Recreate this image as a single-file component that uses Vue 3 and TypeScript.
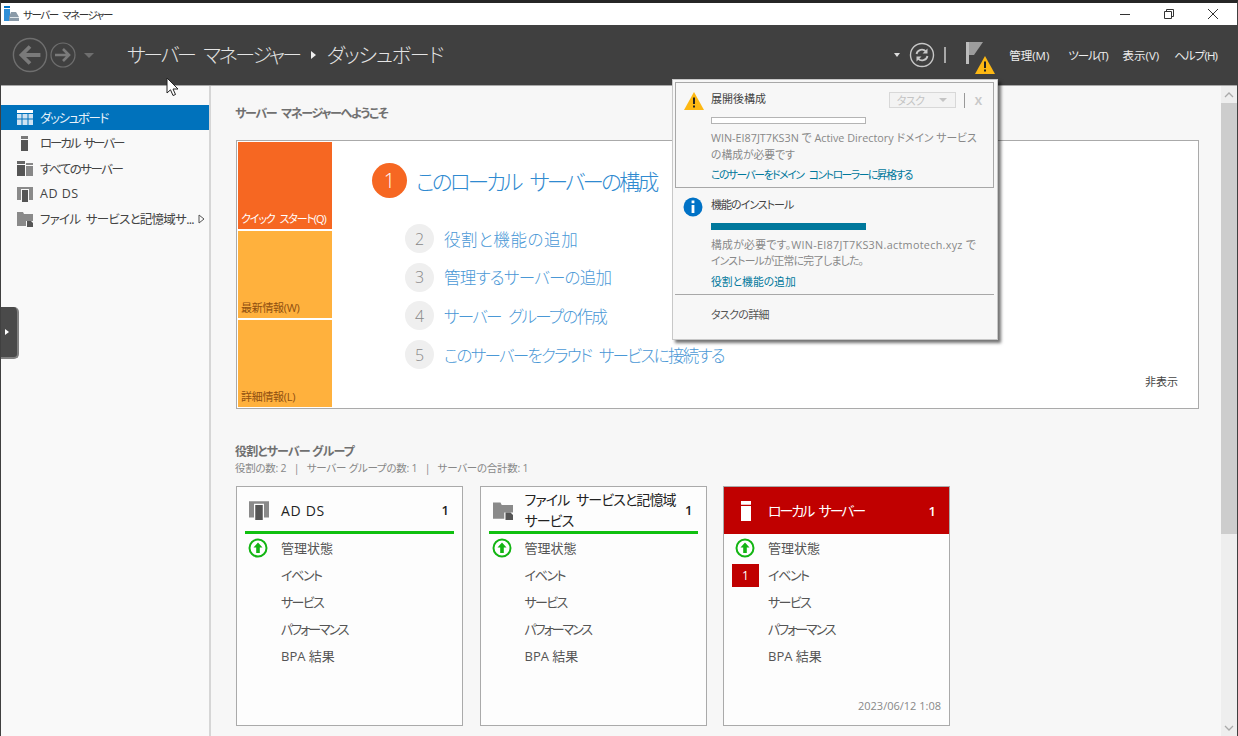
<script setup lang="ts">
interface NavItem {
  label: string
  icon: string
  ls: number
  ws?: number
  active?: boolean
  arrow?: boolean
}

interface RoleCard {
  title: string
  ls: number
  ws?: number
  count: number
  icon: string
  alert?: boolean
  time?: string
}

const navItems: NavItem[] = [
  { label: 'ダッシュボード', icon: 'dash', ls: -1.4, active: true },
  { label: 'ローカル サーバー', icon: 'local', ls: -2.1, ws: 3 },
  { label: 'すべてのサーバー', icon: 'all', ls: -1.5 },
  { label: 'AD DS', icon: 'adds', ls: 0.5 },
  { label: 'ファイル サービスと記憶域サ...', icon: 'files', ls: -0.75, ws: 3, arrow: true },
]

const steps = [
  { n: 2, label: '役割と機能の追加', ls: 0.6 },
  { n: 3, label: '管理するサーバーの追加', ls: -0.7 },
  { n: 4, label: 'サーバー グループの作成', ls: -1.7 },
  { n: 5, label: 'このサーバーをクラウド サービスに接続する', ls: -1.7 },
]

const menus = [
  { label: '管理(M)', ls: 0 },
  { label: 'ツール(T)', ls: -1.1 },
  { label: '表示(V)', ls: 0 },
  { label: 'ヘルプ(H)', ls: -0.9 },
]

const rows = [
  { label: 'イベント', ls: -1.4 },
  { label: 'サービス', ls: -1.6 },
  { label: 'パフォーマンス', ls: -2 },
  { label: 'BPA 結果', ls: 0 },
]

const cards: RoleCard[] = [
  { title: 'AD DS', ls: 0.7, count: 1, icon: 'adds' },
  { title: 'ファイル サービスと記憶域 サービス', ls: -0.9, ws: 4, count: 1, icon: 'files' },
  { title: 'ローカル サーバー', ls: -2.1, ws: 4, count: 1, icon: 'local', alert: true, time: '2023/06/12 1:08' },
]
</script>

<template>
  <div class="window">
    <div class="titlebar">
      <svg class="app-icon" width="16" height="16" viewBox="0 0 16 16">
        <rect x="0" y="0" width="6" height="2" fill="#0072c6" />
        <rect x="0" y="3" width="6" height="12" fill="#2f8fd8" />
        <path d="M5 11 L7 6 H12 L15 11 V15 H5 Z" fill="#8a9aa8" />
        <rect x="6" y="11" width="9" height="1" fill="#dfe6ea" />
      </svg>
      <span class="title-text">サーバー マネージャー</span>
      <div class="window-btns">
        <svg width="12" height="12" viewBox="0 0 12 12"><path d="M1 6.5H11" stroke="#333" fill="none" /></svg>
        <svg width="12" height="12" viewBox="0 0 12 12"><path d="M1.5 3.5H8.5V10.5H1.5Z M3.5 3.5V1.5H10.5V8.5H8.5" stroke="#333" fill="none" /></svg>
        <svg width="12" height="12" viewBox="0 0 12 12"><path d="M1 1L11 11M11 1L1 11" stroke="#333" fill="none" /></svg>
      </div>
    </div>

    <header class="header">
      <div class="nav-btns">
        <svg width="36" height="36" viewBox="0 0 38 38">
          <circle cx="19" cy="19" r="17.5" fill="none" stroke="#6e6e6e" stroke-width="1.5" />
          <path d="M30 19H11M19 10L10 19L19 28" fill="none" stroke="#7a7a7a" stroke-width="4" />
        </svg>
        <svg width="26" height="26" viewBox="0 0 26 26">
          <circle cx="13" cy="13" r="12" fill="none" stroke="#6e6e6e" stroke-width="1.2" />
          <path d="M5 13H19M13 7L19 13L13 19" fill="none" stroke="#7a7a7a" stroke-width="2.6" />
        </svg>
        <span class="nav-caret" />
      </div>
      <div class="crumb">
        <span class="crumb-root">サーバー マネージャー</span>
        <span class="crumb-arrow" />
        <span class="crumb-page">ダッシュボード</span>
      </div>
      <div class="header-right">
        <span class="small-caret" />
        <svg class="refresh" width="26" height="26" viewBox="0 0 26 26">
          <circle cx="13" cy="13" r="11.5" fill="none" stroke="#c8c8c8" stroke-width="1.4" />
          <path d="M7.5 12A5.5 5.5 0 0 1 17 9.5M18.5 14A5.5 5.5 0 0 1 9 16.5" fill="none" stroke="#c8c8c8" stroke-width="1.8" />
          <path d="M18.5 6.5V11.5H13.5Z M7.5 19.5V14.5H12.5Z" fill="#c8c8c8" />
        </svg>
        <span class="bar" />
        <div class="flag">
          <svg width="18" height="24" viewBox="0 0 18 24">
            <path d="M0 0H3V22H0Z" fill="#bdbdbd" />
            <path d="M3 0H17L8 13H3Z" fill="#9c9c9c" />
          </svg>
          <svg class="flag-warn" width="20" height="18" viewBox="0 0 20 18">
            <path d="M10 0L20 18H0Z" fill="#fdb813" />
            <path d="M9 5.5H11V12H9ZM9 13.5H11V15.5H9Z" fill="#222" />
          </svg>
        </div>
        <nav class="menus">
          <span v-for="m in menus" :key="m.label" :style="{ letterSpacing: m.ls + 'px' }">{{ m.label }}</span>
        </nav>
      </div>
    </header>

    <div class="body">
      <aside class="sidebar">
        <div
          v-for="item in navItems"
          :key="item.label"
          class="nav-item"
          :class="{ active: item.active }"
        >
          <svg class="nav-icon" width="16" height="16" viewBox="0 0 16 16">
            <template v-if="item.icon === 'dash'">
              <rect x="0" y="0" width="16" height="3" fill="#fff" />
              <path d="M0 4H4.5V8.5H0ZM5.5 4H10.5V8.5H5.5ZM11.5 4H16V8.5H11.5ZM0 9.5H4.5V15H0ZM5.5 9.5H10.5V15H5.5ZM11.5 9.5H16V15H11.5Z" fill="#cfe3f3" />
            </template>
            <template v-else-if="item.icon === 'local'">
              <rect x="4" y="1" width="7" height="3" fill="#7a7a7a" />
              <rect x="4" y="5" width="7" height="11" fill="#555" />
            </template>
            <template v-else-if="item.icon === 'all'">
              <rect x="0" y="1" width="8" height="3" fill="#666" />
              <rect x="0" y="5" width="8" height="11" fill="#555" />
              <rect x="9" y="3" width="7" height="2" fill="#888" />
              <rect x="9" y="6" width="7" height="10" fill="#888" />
            </template>
            <template v-else-if="item.icon === 'adds'">
              <path d="M0 1H4V14H0ZM12 1H16V14H12ZM4 1H12V3H4Z" fill="#8a8a8a" />
              <rect x="5" y="4" width="6" height="12" fill="#555" />
            </template>
            <template v-else>
              <path d="M0 1H6L7 3H16V10H9V15H0Z" fill="#8a8a8a" />
              <path d="M10 10H14L16 12V16H10Z" fill="#555" />
            </template>
          </svg>
          <span class="nav-label" :style="{ letterSpacing: item.ls + 'px', wordSpacing: (item.ws ?? 0) + 'px' }">{{ item.label }}</span>
          <svg v-if="item.arrow" class="nav-arrow" width="7" height="10" viewBox="0 0 7 10">
            <path d="M1 1L6 5L1 9Z" fill="none" stroke="#555" />
          </svg>
        </div>
        <div class="drawer"><span /></div>
      </aside>

      <main class="main">
        <div class="content">
          <h2 class="welcome">サーバー マネージャーへようこそ</h2>
          <section class="quick">
            <div class="tiles">
              <div class="tile primary">クイック スタート(Q)</div>
              <div class="tile">最新情報(W)</div>
              <div class="tile">詳細情報(L)</div>
            </div>
            <div class="quick-body">
              <div class="step-main">
                <span class="step-main-n">1</span>
                <span class="step-main-label">このローカル サーバーの構成</span>
              </div>
              <div class="step-list">
                <div v-for="s in steps" :key="s.n" class="step">
                  <span class="step-n">{{ s.n }}</span>
                  <span :style="{ letterSpacing: s.ls + 'px' }">{{ s.label }}</span>
                </div>
              </div>
            </div>
            <span class="hide-link">非表示</span>
          </section>

          <h3 class="roles-title">役割とサーバー グループ</h3>
          <p class="roles-sub">役割の数: 2 &nbsp; | &nbsp; サーバー グループの数: 1 &nbsp; | &nbsp; サーバーの合計数: 1</p>

          <div class="cards">
            <article v-for="c in cards" :key="c.title" class="card">
              <div class="card-head" :class="{ alert: c.alert }">
                <svg class="card-icon" width="20" height="20" viewBox="0 0 16 16">
                  <template v-if="c.icon === 'adds'">
                    <path d="M0 1H4V14H0ZM12 1H16V14H12ZM4 1H12V3H4Z" fill="#8a8a8a" />
                    <rect x="5" y="4" width="6" height="12" fill="#555" />
                  </template>
                  <template v-else-if="c.icon === 'files'">
                    <path d="M0 2H6L7 4H16V10H9V15H0Z" fill="#8a8a8a" />
                    <path d="M10 10H14L16 12V16H10Z" fill="#555" />
                  </template>
                  <template v-else>
                    <rect x="4" y="0" width="8" height="3" fill="#fff" />
                    <rect x="4" y="4" width="8" height="12" fill="#fff" />
                  </template>
                </svg>
                <span class="card-title" :style="{ letterSpacing: c.ls + 'px', wordSpacing: (c.ws ?? 0) + 'px' }">{{ c.title }}</span>
                <span class="card-count">{{ c.count }}</span>
              </div>
              <ul class="card-rows">
                <li>
                  <svg class="status" width="20" height="20" viewBox="0 0 20 20">
                    <circle cx="10" cy="10" r="8.5" fill="#fff" stroke="#13b513" stroke-width="2" />
                    <path d="M10 4.5L14.5 9.5H11.8V15H8.2V9.5H5.5Z" fill="#13b513" />
                  </svg>
                  <span>管理状態</span>
                </li>
                <li v-for="(r, i) in rows" :key="r.label">
                  <span v-if="c.alert && i === 0" class="badge">1</span>
                  <span :style="{ letterSpacing: r.ls + 'px' }">{{ r.label }}</span>
                </li>
              </ul>
              <time v-if="c.time" class="card-time">{{ c.time }}</time>
            </article>
          </div>
        </div>
        <div class="scrollbar">
          <svg width="10" height="6" viewBox="0 0 10 6"><path d="M1 5L5 1L9 5" fill="none" stroke="#aaa" stroke-width="1.3" /></svg>
          <div class="thumb" />
          <svg class="scroll-down" width="10" height="6" viewBox="0 0 10 6"><path d="M1 1L5 5L9 1" fill="none" stroke="#aaa" stroke-width="1.3" /></svg>
        </div>
      </main>
    </div>

    <div class="popup">
      <div class="notice notice-warn">
        <svg class="notice-icon" width="20" height="18" viewBox="0 0 20 18">
          <path d="M10 0L20 18H0Z" fill="#fdb813" />
          <path d="M9 5.5H11V12H9ZM9 13.5H11V15.5H9Z" fill="#222" />
        </svg>
        <div class="notice-body">
          <div class="notice-title">展開後構成</div>
          <div class="progress" />
          <p class="notice-text">WIN-EI87JT7KS3N で Active Directory ドメイン サービス<br>の構成が必要です</p>
          <a class="notice-link tight">このサーバーをドメイン コントローラーに昇格する</a>
        </div>
        <div class="notice-tools">
          <span class="task-btn">タスク<i /></span>
          <span class="tool-bar" />
          <span class="tool-x">X</span>
        </div>
      </div>
      <div class="notice notice-info">
        <svg class="notice-icon" width="20" height="20" viewBox="0 0 20 20">
          <circle cx="10" cy="10" r="9.5" fill="#0072c6" />
          <path d="M8.6 3.5H11.4V6.2H8.6ZM8.6 8H11.4V16H8.6Z" fill="#fff" />
        </svg>
        <div class="notice-body">
          <div class="notice-title kana">機能のインストール</div>
          <div class="progress done" />
          <p class="notice-text"><span class="wide">構成が必要です。WIN-EI87JT7KS3N.actmotech.xyz で</span><br><span class="narrow">インストールが正常に完了しました。</span></p>
          <a class="notice-link">役割と機能の追加</a>
        </div>
      </div>
      <div class="task-detail">タスクの詳細</div>
    </div>

    <svg class="cursor" width="14" height="20" viewBox="0 0 14 20">
      <path d="M1 1V16L4.5 12.8L7 18.5L9.5 17.5L7 12H12Z" fill="#fff" stroke="#222" stroke-width="1" />
    </svg>
  </div>
</template>

<style>
html,
body {
  margin: 0;
  overflow: hidden;
}
</style>

<style scoped>
.window {
  position: relative;
  width: 1238px;
  height: 736px;
  overflow: hidden;
  display: flex;
  flex-direction: column;
  box-sizing: border-box;
  border-top: 3px solid #262626;
  border-left: 1px solid #404040;
  border-right: 1px solid #404040;
  font-family: "Open Sans", "Noto Sans CJK JP", sans-serif;
  font-feature-settings: "palt";
  color: #444;
  font-size: 12px;
}

.titlebar {
  height: 22px;
  flex: none;
  display: flex;
  align-items: center;
  background: #fff;
  padding-left: 3px;
}

.app-icon {
  margin-right: 3px;
}

.title-text {
  font-size: 10.5px;
  letter-spacing: -1.4px;
  word-spacing: 3px;
  color: #333;
}

.window-btns {
  margin-left: auto;
  margin-right: 18px;
  display: flex;
  gap: 32px;
}

.header {
  height: 60px;
  flex: none;
  display: flex;
  align-items: center;
  background: #404040;
  border-bottom: 1px solid #a8a8a8;
  box-sizing: content-box;
}

.nav-btns {
  display: flex;
  align-items: center;
  gap: 2px;
  padding-left: 11px;
  width: 126px;
  box-sizing: border-box;
}

.nav-caret {
  margin-left: 6px;
  border-left: 5px solid transparent;
  border-right: 5px solid transparent;
  border-top: 5px solid #6e6e6e;
}

.crumb {
  display: flex;
  align-items: center;
  gap: 11px;
  font-size: 20px;
  font-weight: 300;
  color: #e4e4e4;
  margin-top: -1px;
}

.crumb-root {
  letter-spacing: -2.4px;
  word-spacing: 6px;
}

.crumb-page {
  letter-spacing: -1.1px;
}

.crumb-arrow {
  border-top: 4px solid transparent;
  border-bottom: 4px solid transparent;
  border-left: 5px solid #eee;
}

.header-right {
  margin-left: auto;
  display: flex;
  align-items: center;
}

.small-caret {
  margin-right: 9px;
  border-left: 3px solid transparent;
  border-right: 3px solid transparent;
  border-top: 4px solid #ddd;
}

.bar {
  width: 2px;
  height: 16px;
  background: #a8a8a8;
  margin-left: 9px;
  margin-right: 20px;
}

.flag {
  position: relative;
  width: 18px;
  height: 24px;
  margin-top: -3px;
  margin-right: 25px;
}

.flag-warn {
  position: absolute;
  left: 9px;
  top: 14px;
}

.menus {
  display: flex;
  gap: 15px;
  margin-right: 20px;
  color: #eee;
  font-size: 11.5px;
}

.menus span:first-child {
  margin-right: 4px;
}

.body {
  flex: 1;
  display: flex;
  min-height: 0;
}

.sidebar {
  position: relative;
  width: 208px;
  flex: none;
  background: #f9f9f9;
  border-right: 2px solid #d6d6d6;
  padding-top: 19px;
}

.nav-item {
  height: 25.3px;
  display: flex;
  align-items: center;
  padding-left: 16px;
  font-size: 12.5px;
  color: #444;
  box-sizing: border-box;
}

.nav-item.active {
  background: #0072bc;
  color: #e8f2fa;
}

.nav-icon {
  flex: none;
  margin-right: 7px;
}

.nav-label {
  white-space: nowrap;
}

.nav-arrow {
  margin-left: 4px;
}

.drawer {
  position: absolute;
  left: -1px;
  top: 221px;
  width: 19px;
  height: 52px;
  box-sizing: border-box;
  background: #4a4a4a;
  border-right: 2px solid #808080;
  border-bottom: 2px solid #808080;
  border-radius: 0 5px 5px 0;
  display: flex;
  align-items: center;
  justify-content: center;
}

.drawer span {
  border-top: 3px solid transparent;
  border-bottom: 3px solid transparent;
  border-left: 4px solid #fff;
  margin-right: 3px;
}

.main {
  flex: 1;
  display: flex;
  min-width: 0;
  background: #f7f7f7;
}

.content {
  flex: 1;
  min-width: 0;
  padding: 20px 0 0 25px;
}

.welcome {
  margin: 0 0 19px -1px;
  font-size: 12px;
  line-height: 15px;
  letter-spacing: -1.3px;
  word-spacing: 3px;
  font-weight: 700;
  color: #707070;
}

.quick {
  position: relative;
  width: 963px;
  height: 269px;
  box-sizing: border-box;
  border: 1px solid #aaa;
  background: #fff;
  padding: 1px;
  display: flex;
}

.tiles {
  width: 94px;
  flex: none;
  display: flex;
  flex-direction: column;
  gap: 2px;
}

.tile {
  flex: 1;
  background: #ffb13d;
  color: #8f4f10;
  font-size: 11px;
  white-space: nowrap;
  letter-spacing: -0.3px;
  display: flex;
  align-items: flex-end;
  padding: 0 3px 3px;
}

.tile.primary {
  background: #f66722;
  color: #fff;
  letter-spacing: -1.1px;
  word-spacing: 3px;
}

.quick-body {
  padding: 21px 0 0 40px;
}

.step-main {
  display: flex;
  align-items: center;
  gap: 9px;
  font-size: 21.5px;
  font-weight: 300;
  color: #2f8ad0;
}

.step-main-label {
  letter-spacing: -2.8px;
  word-spacing: 6px;
}

.step-main-n {
  width: 35px;
  height: 35px;
  border-radius: 50%;
  background: #f66722;
  color: #fff;
  font-size: 20px;
  display: flex;
  align-items: center;
  justify-content: center;
}

.step-list {
  margin: 26px 0 0 33px;
  display: flex;
  flex-direction: column;
  gap: 9.7px;
}

.step {
  display: flex;
  align-items: center;
  gap: 10px;
  height: 29px;
  font-size: 16.5px;
  font-weight: 300;
  word-spacing: 5px;
  color: #4a98d6;
}

.step-n {
  width: 29px;
  height: 29px;
  border-radius: 50%;
  background: #efefef;
  color: #888;
  font-size: 16px;
  display: flex;
  align-items: center;
  justify-content: center;
}

.hide-link {
  position: absolute;
  right: 20px;
  bottom: 19px;
  font-size: 11px;
  color: #444;
}

.roles-title {
  margin: 35px 0 0 -1px;
  font-size: 12px;
  line-height: 15px;
  letter-spacing: -0.8px;
  font-weight: 700;
  color: #707070;
}

.roles-sub {
  margin: 2px 0 11px -1px;
  font-size: 10.5px;
  line-height: 14px;
  letter-spacing: -0.25px;
  color: #888;
}

.cards {
  display: flex;
  gap: 16.5px;
}

.card {
  position: relative;
  width: 227px;
  height: 240px;
  flex: none;
  box-sizing: border-box;
  border: 1px solid #aaa;
  background: #fdfdfd;
}

.card-head {
  height: 42px;
  padding-top: 2px;
  margin: 0 8px;
  display: flex;
  align-items: center;
  border-bottom: 3px solid #10c010;
  box-sizing: content-box;
  color: #222;
}

.card-head.alert {
  margin: 0;
  padding: 0 8px;
  height: 47px;
  background: #c00000;
  color: #fff;
  border-bottom: 0;
}

.card-icon {
  margin-left: 4px;
  margin-right: 12px;
  flex: none;
}

.card-title {
  flex: 1;
  font-size: 14px;
  line-height: 21px;
  min-width: 0;
}

.card-count {
  margin-left: 4px;
  margin-right: 5px;
  font-size: 13px;
  font-weight: 600;
}

.card-rows {
  margin: 0;
  padding: 0;
  list-style: none;
}

.card-rows li {
  position: relative;
  height: 27px;
  padding-left: 44px;
  display: flex;
  align-items: center;
  font-size: 13px;
  color: #555;
}

.status {
  position: absolute;
  left: 11px;
  top: 4px;
}

.badge {
  position: absolute;
  left: 8px;
  top: 3px;
  width: 27px;
  height: 23px;
  background: #c00000;
  color: #fff;
  font-size: 12px;
  display: flex;
  align-items: center;
  justify-content: center;
}

.card-time {
  position: absolute;
  right: 8px;
  bottom: 12px;
  font-size: 11px;
  color: #888;
}

.scrollbar {
  width: 16px;
  flex: none;
  background: #eeeeee;
  display: flex;
  flex-direction: column;
  align-items: center;
  padding-top: 6px;
  box-sizing: border-box;
  position: relative;
}

.thumb {
  align-self: stretch;
  height: 431px;
  margin-top: 5px;
  background: #cdcdcd;
}

.scroll-down {
  position: absolute;
  bottom: 5px;
}

.popup {
  position: absolute;
  left: 671px;
  top: 76px;
  width: 326px;
  height: 261px;
  box-sizing: border-box;
  background: #f7f7f7;
  border: 1px solid #c8c8c8;
  box-shadow: 3px 3px 3px rgba(0, 0, 0, 0.55);
  padding: 2px 3px 3px 2px;
}

.notice {
  position: relative;
  display: flex;
  box-sizing: border-box;
}

.notice-warn {
  height: 106px;
  border: 1px solid #a8a8a8;
}

.notice-info {
  height: 107px;
  border-bottom: 1px solid #a8a8a8;
}

.notice-icon {
  position: absolute;
  left: 8px;
  top: 9px;
}

.notice-body {
  margin-left: 35px;
  padding-top: 8px;
  width: 280px;
}

.notice-info .notice-body {
  margin-left: 36px;
  padding-top: 9px;
}

.notice-title {
  font-size: 11px;
  line-height: 16px;
  color: #444;
}

.notice-title.kana {
  letter-spacing: -1px;
}

.progress {
  width: 155px;
  height: 7px;
  box-sizing: border-box;
  margin-top: 10px;
  border: 1px solid #b4b4b4;
  background: #fff;
}

.progress.done {
  background: #00789c;
  border-color: #00789c;
}

.notice-text {
  margin: 5px 0 0;
  font-size: 10.8px;
  line-height: 17px;
  color: #888;
  white-space: nowrap;
}

.notice-info .notice-text {
  margin-top: 7px;
  line-height: 15.5px;
}

.notice-text .wide {
  letter-spacing: 0.3px;
}

.notice-text .narrow {
  letter-spacing: -0.8px;
}

.notice-link {
  display: block;
  margin-top: 4px;
  font-size: 10.8px;
  line-height: 15px;
  color: #00789c;
}

.notice-link.tight {
  letter-spacing: -1.45px;
  word-spacing: 4px;
}

.notice-info .notice-link {
  margin-top: 6px;
}

.notice-tools {
  position: absolute;
  top: 9px;
  right: 11px;
  display: flex;
  align-items: center;
}

.task-btn {
  width: 67px;
  height: 16px;
  box-sizing: border-box;
  border: 1px solid #d8d8d8;
  background: #f3f3f3;
  color: #c4c4c4;
  font-size: 11px;
  letter-spacing: -0.5px;
  display: flex;
  align-items: center;
  padding-left: 7px;
  position: relative;
}

.task-btn i {
  position: absolute;
  right: 8px;
  top: 5px;
  border-left: 4px solid transparent;
  border-right: 4px solid transparent;
  border-top: 4px solid #c4c4c4;
}

.tool-bar {
  width: 1px;
  height: 15px;
  background: #999;
  margin: 0 10px 0 8px;
}

.tool-x {
  font-weight: 700;
  font-size: 11px;
  color: #c8c8c8;
}

.task-detail {
  margin: 12px 0 0 36px;
  font-size: 11px;
  line-height: 16px;
  letter-spacing: -0.7px;
  color: #555;
}

.cursor {
  position: absolute;
  left: 165px;
  top: 74px;
}
</style>
